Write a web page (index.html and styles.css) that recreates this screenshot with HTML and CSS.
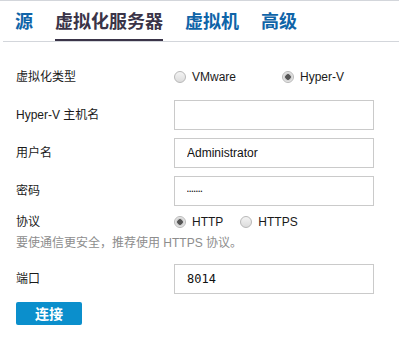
FILE: index.html
```html
<!DOCTYPE html>
<html lang="zh-CN">
<head>
    <meta charset="UTF-8">
    <meta name="viewport" content="width=device-width, initial-scale=1.0">
    <title>虚拟化服务器</title>
    <link rel="stylesheet" href="styles.css">
</head>
<body>
    <div class="page">
        <div class="tabs">
            <a class="tab">源</a>
            <a class="tab active">虚拟化服务器</a>
            <a class="tab">虚拟机</a>
            <a class="tab">高级</a>
        </div>

        <form class="form">
            <div class="row">
                <label class="label">虚拟化类型</label>
                <div class="control radios">
                    <label class="opt opt-wide"><input type="radio" name="vtype"> VMware</label>
                    <label class="opt"><input type="radio" name="vtype" checked> Hyper-V</label>
                </div>
            </div>
            <div class="row">
                <label class="label">Hyper-V 主机名</label>
                <input class="control field" type="text" value="">
            </div>
            <div class="row">
                <label class="label">用户名</label>
                <input class="control field" type="text" value="Administrator">
            </div>
            <div class="row">
                <label class="label">密码</label>
                <input class="control field pwd" type="password" value="1234567">
            </div>
            <div class="row row-small">
                <label class="label">协议</label>
                <div class="control radios">
                    <label class="opt opt-http"><input type="radio" name="proto" checked> HTTP</label>
                    <label class="opt"><input type="radio" name="proto"> HTTPS</label>
                </div>
            </div>
            <p class="hint">要使通信更安全，推荐使用 HTTPS 协议。</p>
            <div class="row">
                <label class="label">端口</label>
                <input class="control field mono" type="text" value="8014">
            </div>
            <button type="button" class="btn">连接</button>
        </form>
    </div>
</body>
</html>
```

FILE: styles.css
```css
body {
    margin: 0;
    font-family: "Liberation Sans", "Noto Sans CJK SC", sans-serif;
    font-size: 12px;
    color: #1a1a1a;
    background-color: white;
}
div.page {
    border-top: 1px solid #d3d6db;
}

/* 탭 */
div.tabs {
    display: flex;
    margin-left: 3px;
    padding-left: 12px;
    border-bottom: 1px solid #d3d6db;
}
div.tabs a.tab {
    height: 38px;
    line-height: 38px;
    margin-right: 22px;
    font-family: "Noto Sans CJK SC", sans-serif;
    font-size: 18px;
    font-weight: bold;
    color: #0f64a8;
    border-bottom: 2px solid transparent;
}
div.tabs a.tab.active {
    color: #3a3448;
    border-bottom-color: #3a3448;
}

/* 폼 */
form.form {
    padding: 20px 0 0 16px;
}
div.row {
    display: flex;
    align-items: center;
    height: 30px;
    margin-bottom: 8px;
}
div.row.row-small {
    height: 20px;
    margin-top: -2px;
    margin-bottom: 4px;
}
label.label {
    width: 158px;
    line-height: 14px;
}
.control {
    width: 200px;
    box-sizing: border-box;
}
div.radios {
    display: flex;
    align-items: center;
}
label.opt {
    display: flex;
    align-items: center;
    gap: 3px;
}
label.opt-wide {
    width: 108px;
}
label.opt-http {
    margin-right: 17px;
}
label.opt input {
    appearance: none;
    width: 12px;
    height: 12px;
    margin: 0 3px 0 0;
    border: 1px solid #b8b8b8;
    border-radius: 50%;
    background: linear-gradient(#f4f4f4, #dcdcdc);
}
label.opt input:checked {
    background: radial-gradient(circle, #555 0 2.5px, #c9c9c9 3px, #ececec 5px);
}

input.field {
    height: 30px;
    border: 1px solid #cacaca;
    padding: 0 12px;
    font-family: "Liberation Sans", sans-serif;
    font-size: 12px;
    color: #111;
    outline: none;
}
input.field.pwd {
    font-size: 5px;
    letter-spacing: 0.5px;
}
input.field.mono {
    font-family: "DejaVu Sans Mono", monospace;
    font-size: 12px;
}

p.hint {
    margin: 0 0 14px 0;
    line-height: 14px;
    color: #8d8d8d;
}

.btn {
    width: 66px;
    height: 23px;
    border: none;
    border-radius: 2px;
    background-color: #0b8fcc;
    color: white;
    font-family: "Noto Sans CJK SC", sans-serif;
    font-size: 14px;
    font-weight: bold;
    line-height: 23px;
    padding: 0;
}
```
